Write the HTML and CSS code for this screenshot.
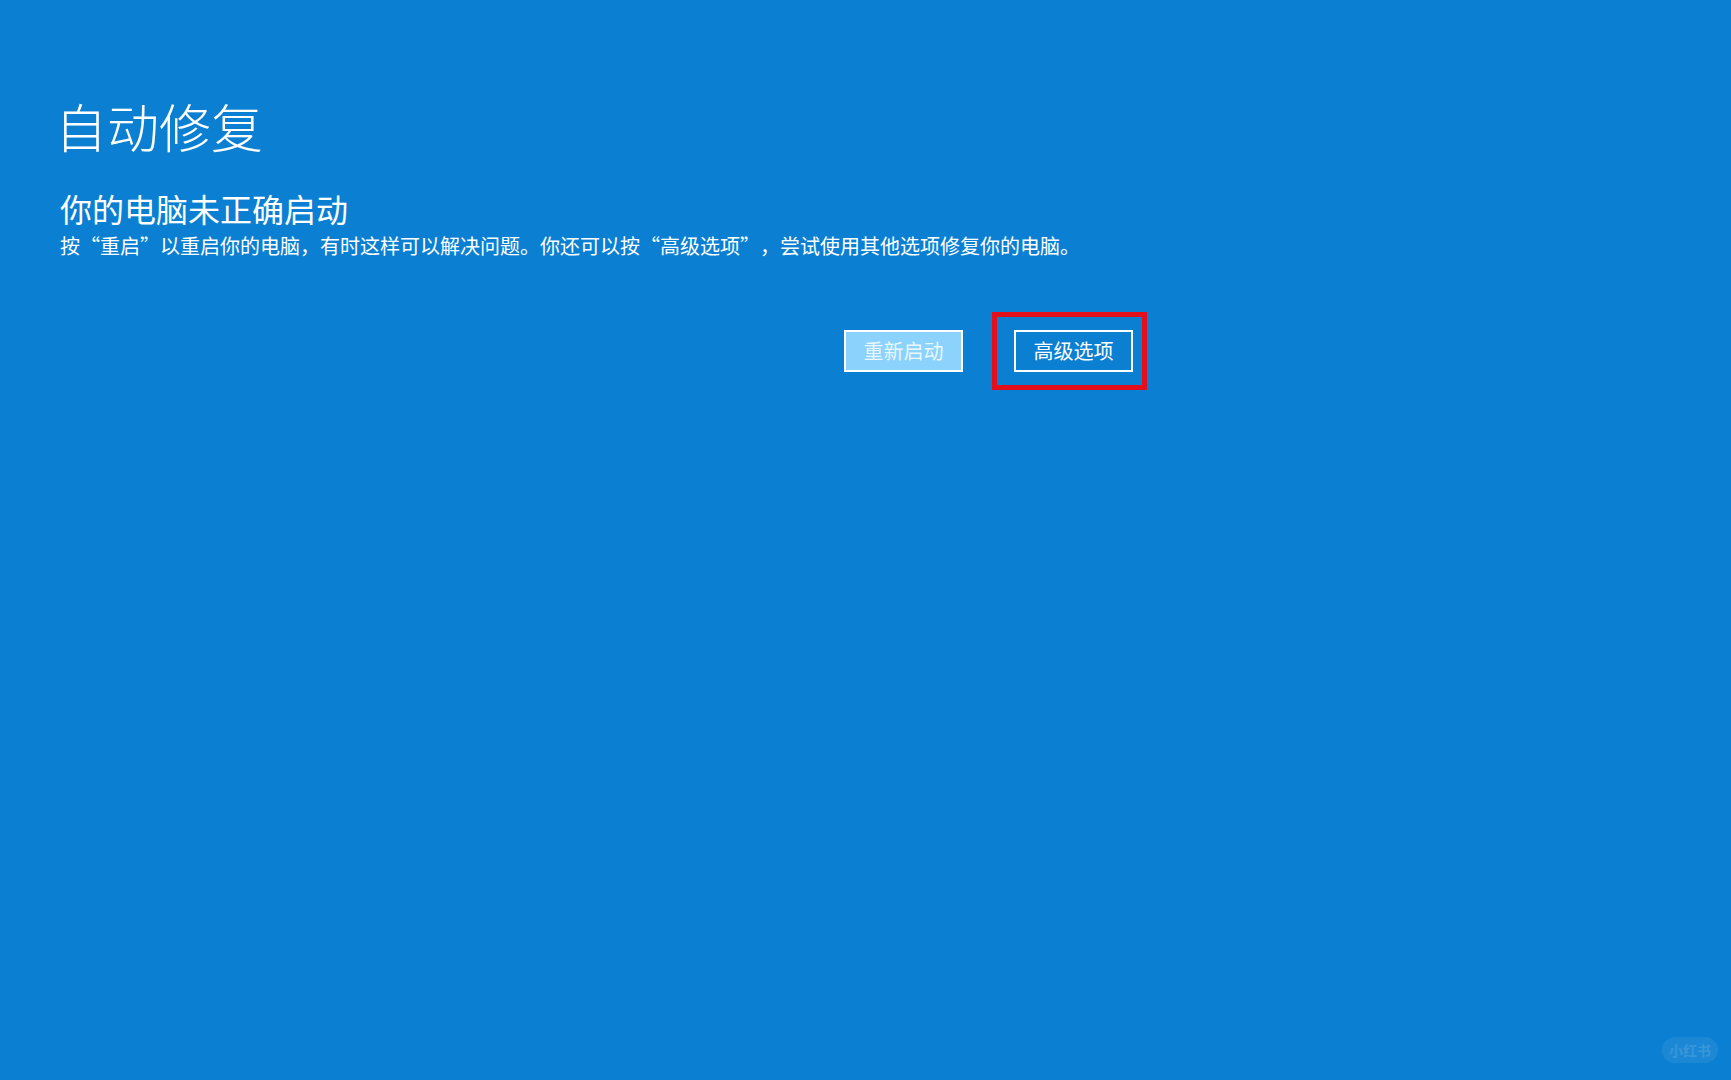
FILE: index.html
```html
<!DOCTYPE html>
<html lang="zh-CN">
<head>
<meta charset="utf-8">
<title>自动修复</title>
<link rel="stylesheet" href="styles.css">
</head>
<body>
<main class="screen">
  <h1 class="title">自动修复</h1>
  <h2 class="subtitle">你的电脑未正确启动</h2>
  <p class="desc">按“重启”以重启你的电脑，有时这样可以解决问题。你还可以按“高级选项”，尝试使用其他选项修复你的电脑。</p>
  <div class="actions">
    <button class="btn btn-primary">重新启动</button>
    <button class="btn btn-secondary">高级选项</button>
  </div>
</main>
<div class="highlight"></div>
<div class="watermark">小红书</div>
</body>
</html>
```
FILE: styles.css
```css
html, body {
  margin: 0;
  padding: 0;
  width: 100%;
  height: 100%;
  overflow: hidden;
}
body {
  background: #0b7fd2;
  color: #ffffff;
  font-family: "Noto Sans CJK SC", "Noto Sans", sans-serif;
  position: relative;
  text-spacing-trim: space-all;
}
.screen {
  padding: 93px 0 0 55px;
}
.title {
  margin: 0;
  font-size: 52px;
  font-weight: 300;
  line-height: 66px;
}
.subtitle {
  margin: 29px 0 0 5px;
  font-size: 32px;
  font-weight: 400;
  line-height: 40px;
}
.desc {
  margin: 3px 0 0 5px;
  font-size: 20px;
  line-height: 30px;
}
.actions {
  display: flex;
  gap: 51px;
  margin: 69px 0 0 789px;
}
.btn {
  width: 119px;
  height: 42px;
  box-sizing: border-box;
  border: 2px solid #ffffff;
  font-family: inherit;
  font-size: 20px;
  line-height: 36px;
  padding: 0;
  color: #ffffff;
  cursor: pointer;
}
.btn-primary {
  background: #8bd2fc;
  color: #eaf7ff;
}
.btn-secondary {
  background: transparent;
}
.highlight {
  position: absolute;
  left: 992px;
  top: 312px;
  width: 155px;
  height: 78px;
  box-sizing: border-box;
  border: 5px solid #e3101c;
}
.watermark {
  position: absolute;
  right: 13px;
  bottom: 17px;
  width: 56px;
  height: 26px;
  border-radius: 13px;
  background: rgba(255, 255, 255, 0.07);
  color: rgba(255, 255, 255, 0.14);
  font-size: 14px;
  font-weight: 700;
  line-height: 26px;
  text-align: center;
}
```
